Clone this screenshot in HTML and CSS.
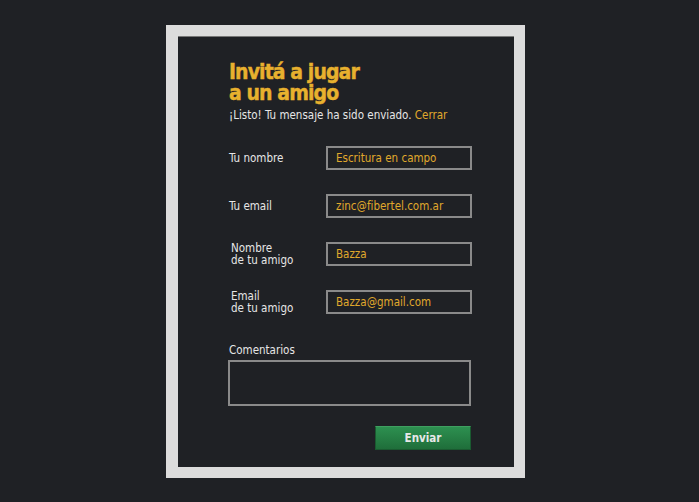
FILE: index.html
```html
<!DOCTYPE html>
<html lang="es">
<head>
<meta charset="utf-8">
<title>Invitá a jugar a un amigo</title>
<link rel="stylesheet" href="styles.css">
</head>
<body>
<div class="frame">
  <div class="panel">
    <h1 class="title">Invitá a jugar<br>a un amigo</h1>
    <p class="notice">¡Listo! Tu mensaje ha sido enviado. <a class="close" href="#">Cerrar</a></p>
    <form class="form">
      <div class="row">
        <label class="label">Tu nombre</label>
        <div class="field">Escritura en campo</div>
      </div>
      <div class="row">
        <label class="label">Tu email</label>
        <div class="field">zinc@fibertel.com.ar</div>
      </div>
      <div class="row">
        <label class="label label-two">Nombre<br>de tu amigo</label>
        <div class="field">Bazza</div>
      </div>
      <div class="row">
        <label class="label label-two">Email<br>de tu amigo</label>
        <div class="field">Bazza@gmail.com</div>
      </div>
      <label class="comments-label">Comentarios</label>
      <div class="comments"></div>
      <div class="actions">
        <button type="button" class="send">Enviar</button>
      </div>
    </form>
  </div>
</div>
</body>
</html>
```
FILE: styles.css
```css
html, body {
  margin: 0;
  padding: 0;
}
body {
  background: #1f2125;
  font-family: "DejaVu Sans Condensed", "DejaVu Sans", sans-serif;
  font-stretch: condensed;
  width: 699px;
  height: 502px;
  overflow: hidden;
}
.frame {
  margin: 25px 0 0 166px;
  width: 359px;
  height: 453px;
  box-sizing: border-box;
  background: #dcdcdc;
  padding: 11px 11px 11px 12px;
}
.panel {
  background: #1f2125;
  border-top: 1px solid #777;
  height: 100%;
  box-sizing: border-box;
  padding: 25px 0 0 51px;
  display: flex;
  flex-direction: column;
}
.title {
  margin: 0;
  font-family: "DejaVu Sans Condensed", "DejaVu Sans", sans-serif;
  font-stretch: condensed;
  font-weight: bold;
  font-size: 21px;
  line-height: 21px;
  letter-spacing: -0.9px;
  -webkit-text-stroke: 0.4px #e8b12e;
  color: #e8b12e;
}
.notice {
  margin: 4px 0 0 0;
  font-size: 11.5px;
  line-height: 14px;
  color: #e6e6e6;
}
.close {
  color: #e0a92c;
  text-decoration: none;
}
.form {
  display: flex;
  flex-direction: column;
  margin-top: 24px;
}
.row {
  display: flex;
  align-items: center;
  height: 24px;
  margin-bottom: 24px;
}
.label {
  width: 97px;
  font-size: 11.5px;
  line-height: 12px;
  color: #e6e6e6;
}
.label-two {
  padding-left: 2px;
  width: 95px;
}
.field {
  width: 146px;
  height: 24px;
  box-sizing: border-box;
  border: 2px solid #8a8a8a;
  padding-left: 8px;
  font-size: 11.5px;
  line-height: 20px;
  color: #e0a92c;
}
.comments-label {
  margin-top: 5px;
  font-size: 11.5px;
  line-height: 14px;
  color: #e6e6e6;
}
.comments {
  margin: 3px 0 0 -1px;
  width: 243px;
  height: 46px;
  box-sizing: border-box;
  border: 2px solid #8a8a8a;
}
.actions {
  display: flex;
  justify-content: flex-end;
  width: 242px;
  margin-top: 20px;
}
.send {
  width: 96px;
  height: 24px;
  border: 1px solid #1a5a30;
  border-top-color: #3fa060;
  background: linear-gradient(#2d9050, #1f6e3a);
  color: #e8e8e8;
  font-family: "DejaVu Sans Condensed", "DejaVu Sans", sans-serif;
  font-stretch: condensed;
  font-weight: bold;
  font-size: 11.5px;
  padding: 0;
}
```
